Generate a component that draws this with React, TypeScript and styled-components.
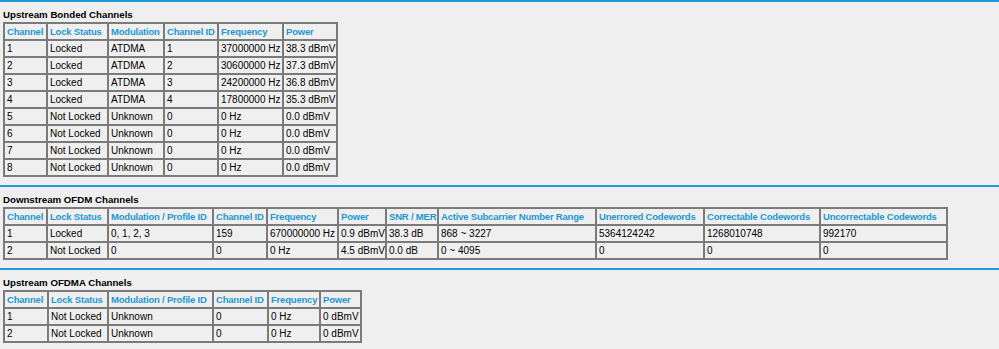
import React from 'react';
import styled, { createGlobalStyle } from 'styled-components';

const GlobalStyle = createGlobalStyle`
  body {
    margin: 0;
    background: #efefef;
    font-family: "Liberation Sans", Arial, sans-serif;
  }
`;

const Page = styled.div`
  width: 999px;
  height: 349px;
  overflow: hidden;
  background: #efefef;
`;

const Section = styled.section`
  border-top: 2px solid #1e9ad6;
  padding: 7px 0 8px 3px;
`;

const Title = styled.h3`
  margin: 0 0 1px 0;
  font-size: 9.7px;
  line-height: 12px;
  font-weight: bold;
  color: #000;
`;

const Table = styled.table<{ $w: number }>`
  width: ${(p) => p.$w}px;
  border: 1px solid #7a7a7a;
  border-spacing: 0;
  table-layout: fixed;
  font-size: 10px;
  white-space: nowrap;
`;

const Col = styled.col<{ $w: number }>`
  width: ${(p) => p.$w}px;
`;

const Row = styled.tr`
  height: 17px;
`;

const Head = styled.th`
  border: 1px solid #7a7a7a;
  padding: 0 0 0 2px;
  text-align: left;
  font-size: 9.5px;
  letter-spacing: -0.2px;
  font-weight: bold;
  color: #1b98d4;
  overflow: hidden;
`;

const Cell = styled.td`
  border: 1px solid #7a7a7a;
  padding: 0 1px 0 2px;
  color: #000;
  overflow: hidden;
`;

type Grid = {
  title: string;
  widths: number[];
  heads: string[];
  rows: string[][];
};

const grids: Grid[] = [
  {
    title: 'Upstream Bonded Channels',
    widths: [43, 61, 56, 54, 65, 54],
    heads: ['Channel', 'Lock Status', 'Modulation', 'Channel ID', 'Frequency', 'Power'],
    rows: [
      ['1', 'Locked', 'ATDMA', '1', '37000000 Hz', '38.3 dBmV'],
      ['2', 'Locked', 'ATDMA', '2', '30600000 Hz', '37.3 dBmV'],
      ['3', 'Locked', 'ATDMA', '3', '24200000 Hz', '36.8 dBmV'],
      ['4', 'Locked', 'ATDMA', '4', '17800000 Hz', '35.3 dBmV'],
      ['5', 'Not Locked', 'Unknown', '0', '0 Hz', '0.0 dBmV'],
      ['6', 'Not Locked', 'Unknown', '0', '0 Hz', '0.0 dBmV'],
      ['7', 'Not Locked', 'Unknown', '0', '0 Hz', '0.0 dBmV'],
      ['8', 'Not Locked', 'Unknown', '0', '0 Hz', '0.0 dBmV'],
    ],
  },
  {
    title: 'Downstream OFDM Channels',
    widths: [43, 61, 105, 54, 71, 48, 52, 158, 108, 116, 127],
    heads: [
      'Channel',
      'Lock Status',
      'Modulation / Profile ID',
      'Channel ID',
      'Frequency',
      'Power',
      'SNR / MER',
      'Active Subcarrier Number Range',
      'Unerrored Codewords',
      'Correctable Codewords',
      'Uncorrectable Codewords',
    ],
    rows: [
      ['1', 'Locked', '0, 1, 2, 3', '159', '670000000 Hz', '0.9 dBmV', '38.3 dB', '868 ~ 3227', '5364124242', '1268010748', '992170'],
      ['2', 'Not Locked', '0', '0', '0 Hz', '4.5 dBmV', '0.0 dB', '0 ~ 4095', '0', '0', '0'],
    ],
  },
  {
    title: 'Upstream OFDMA Channels',
    widths: [44, 60, 105, 55, 52, 41],
    heads: ['Channel', 'Lock Status', 'Modulation / Profile ID', 'Channel ID', 'Frequency', 'Power'],
    rows: [
      ['1', 'Not Locked', 'Unknown', '0', '0 Hz', '0 dBmV'],
      ['2', 'Not Locked', 'Unknown', '0', '0 Hz', '0 dBmV'],
    ],
  },
];

const ChannelTable: React.FC<{ grid: Grid }> = ({ grid }) => (
  <Section>
    <Title>{grid.title}</Title>
    <Table $w={grid.widths.reduce((a, b) => a + b, 0) + 2}>
      <colgroup>
        {grid.widths.map((w, i) => (
          <Col key={i} $w={w} />
        ))}
      </colgroup>
      <tbody>
        <Row>
          {grid.heads.map((h) => (
            <Head key={h}>{h}</Head>
          ))}
        </Row>
        {grid.rows.map((r, i) => (
          <Row key={i}>
            {r.map((c, j) => (
              <Cell key={j}>{c}</Cell>
            ))}
          </Row>
        ))}
      </tbody>
    </Table>
  </Section>
);

const App: React.FC = () => (
  <Page>
    <GlobalStyle />
    {grids.map((g) => (
      <ChannelTable key={g.title} grid={g} />
    ))}
  </Page>
);

export default App;
